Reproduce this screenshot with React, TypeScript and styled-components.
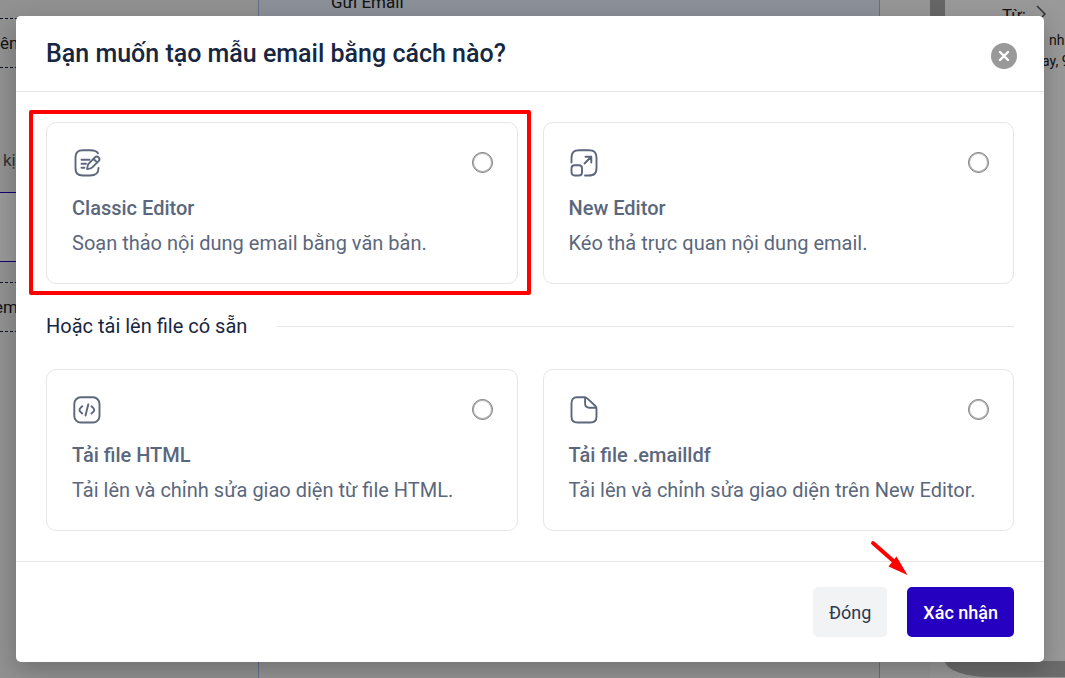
import React from "react";
import styled, { createGlobalStyle } from "styled-components";

const Global = createGlobalStyle`
  *, *::before, *::after { box-sizing: border-box; }
  html, body, #root { height: 100%; }
  body {
    margin: 0;
    overflow: hidden;
    font-family: Roboto, "Noto Sans", sans-serif;
    color: #172742;
    background: #fff;
  }
  h2, h3, p { margin: 0; }
`;

const Screen = styled.div`
  display: grid;
  min-height: 100vh;
  > * { grid-area: 1 / 1; }
`;

const Workspace = styled.div`
  display: flex;
  height: 100vh;
  overflow: hidden;
  font-size: 17px;
  line-height: 20px;
  color: #222;
`;

const Sidebar = styled.div`
  flex: 0 0 258px;
  padding-top: 18px;
  background: #f2f2f2;
`;

const Slot = styled.div<{ $indent?: number }>`
  height: 50px;
  padding: 14px 0;
  text-indent: ${(p) => p.$indent ?? 0}px;
  border: 1px dashed #14213d;
  border-width: 1px 0;
`;

const FieldLabel = styled.p`
  padding: 82px 0 22px 3px;
  color: #555;
`;

const Field = styled.div`
  height: 70px;
  margin-bottom: 20px;
  border: 1px solid #2600c0;
  border-width: 1px 0;
  background: #fff;
`;

const Canvas = styled.div`
  flex: 1;
  display: flex;
  flex-direction: column;
  border: 1px solid #a4b9ec;
  border-width: 0 1px;
  background: #f7f7f7;
`;

const CanvasTop = styled.div`
  height: 320px;
  padding-left: 72px;
  background: #e9f1fd;
  > p { margin-top: -8px; }
`;

const Gutter = styled.div`
  flex: 0 0 50px;
  background: #fafafa;
`;

const Scrollbar = styled.div`
  flex: 0 0 15px;
  height: 640px;
  background: #ababab;
`;

const Preview = styled.div`
  flex: 0 0 120px;
  min-width: 0;
  display: flex;
  flex-direction: column;
  justify-content: space-between;
  font-size: 14px;
  line-height: 21px;
`;

const PreviewFrom = styled.div`
  display: flex;
  justify-content: space-between;
  padding: 5px 17px 4px 57px;
  font-size: 17px;
`;

const PreviewLine = styled.p`
  padding-left: 97px;
  white-space: nowrap;
`;

const Phone = styled.div`
  height: 16px;
  margin-bottom: 1px;
  border-bottom-left-radius: 44px 16px;
  background: #b4b4b4;
`;

const Overlay = styled.div`
  z-index: 1;
  padding: 16px 21px 16px 16px;
  background: rgba(0, 0, 0, 0.4);
`;

const Dialog = styled.section`
  border-radius: 5px;
  background: #fff;
  box-shadow: 0 8px 24px rgba(0, 0, 0, 0.24);
`;

const DialogHeader = styled.header`
  display: flex;
  justify-content: space-between;
  align-items: center;
  height: 76px;
  padding: 0 27px 0 30px;
  border-bottom: 1px solid #e6e6e6;
`;

const DialogTitle = styled.h2`
  font-size: 25px;
  font-weight: 500;
  line-height: 30px;
`;

const CloseButton = styled.button`
  display: grid;
  place-items: center;
  width: 26px;
  height: 26px;
  margin-top: 4px;
  padding: 0;
  border: 0;
  border-radius: 50%;
  background: #999;
`;

const Choices = styled.div`
  padding: 30px;
`;

const CardGrid = styled.div`
  display: grid;
  grid-template-columns: 1fr 1fr;
  gap: 25px;
`;

const Card = styled.label`
  position: relative;
  padding: 25px 24px 25px 25px;
  border: 1px solid #e6e6e6;
  border-radius: 10px;
  color: #5b677c;
`;

const CardTop = styled.div`
  display: flex;
  justify-content: space-between;
  height: 45px;
`;

const Radio = styled.input`
  width: 21px;
  height: 21px;
  margin: 4px 0 0;
  appearance: none;
  border: 1px solid #767676;
  border-radius: 50%;
  box-shadow: inset 0 0 0 1px rgba(118, 118, 118, 0.6);
  &:checked { border: 6px solid #2600c0; }
`;

const CardTitle = styled.h3`
  margin-bottom: 5px;
  font-size: 20px;
  font-weight: 500;
  line-height: 30px;
`;

const CardText = styled.p`
  font-size: 20px;
  line-height: 30px;
`;

const Highlight = styled.span`
  position: absolute;
  inset: -13px -14px -12px -18px;
  border: 4px solid #f00;
  border-radius: 2px;
  pointer-events: none;
`;

const Divider = styled.div`
  display: flex;
  align-items: center;
  gap: 30px;
  padding: 27px 0 28px;
  font-size: 20px;
  line-height: 30px;
  &::after {
    content: "";
    flex: 1;
    height: 1px;
    background: #e6e6e6;
  }
`;

const DialogFooter = styled.footer`
  display: flex;
  justify-content: flex-end;
  gap: 20px;
  padding: 25px 30px;
  border-top: 1px solid #e6e6e6;
`;

const Button = styled.button<{ $primary?: boolean }>`
  position: relative;
  height: 50px;
  padding: 0 16px;
  border: 0;
  border-radius: 5px;
  font-family: inherit;
  font-size: 18px;
  font-weight: ${(p) => (p.$primary ? 500 : 400)};
  color: ${(p) => (p.$primary ? "#fff" : "#2b3850")};
  background: ${(p) => (p.$primary ? "#2600c0" : "#f1f3f5")};
`;

const Arrow = styled.svg`
  position: absolute;
  left: -38px;
  top: -48px;
  pointer-events: none;
`;

const Glyph = ({ children }: { children: React.ReactNode }) => (
  <svg width="30" height="30" viewBox="0 0.5 30 30" fill="none" stroke="#5b677c"
    strokeWidth="1.9" strokeLinecap="round" strokeLinejoin="round" aria-hidden="true">
    {children}
  </svg>
);

const EditGlyph = (
  <Glyph>
    <path d="M26 5.8C24.6 3 22 2.8 18 2.8H11C5.5 2.8 3.5 4.8 3.5 10.8V20C3.5 26 5.5 28 11 28H18C24 28 26.5 26 26.5 20.5" />
    <path d="M9.5 12.2H17.5M9.5 16.2H14M9.5 20.2H12.5" />
    <path d="M22.8 10C24 8.8 25.7 8.8 26.7 9.8C27.7 10.8 27.7 12.4 26.6 13.6L20 20.2C19.2 21 18.2 21.4 15.2 21.6C15.3 18.5 15.8 17.2 16.5 16.4ZM21.5 11.4L25.2 15" />
  </Glyph>
);

const ScaleGlyph = (
  <Glyph>
    <path d="M2.5 15V11C2.5 4.8 4.5 2.8 10.5 2.8H19.5C25.5 2.8 27.5 4.8 27.5 10.8V20C27.5 26 25.5 28 19.5 28H16" />
    <rect x="2.5" y="17.8" width="10.5" height="10.2" rx="3" />
    <path d="M15.5 16L21.5 10M16.5 9.2H22.3V15" />
  </Glyph>
);

const CodeGlyph = (
  <Glyph>
    <rect x="2.3" y="2.8" width="25.2" height="25.2" rx="6.5" />
    <path d="M10.2 11.8L8.5 13.4C7.2 14.6 7.2 16.2 8.5 17.4L10.2 19M19.5 11.8L21.2 13.4C22.5 14.6 22.5 16.2 21.2 17.4L19.5 19M16.3 9.8L13.5 21" />
  </Glyph>
);

const FileGlyph = (
  <Glyph>
    <path d="M8 2.8H15C16.5 2.8 17.7 3.4 18.8 4.4L25.9 11C27 12 27.5 13.1 27.5 14.7V22C27.5 26 25.7 28 21.5 28H8.5C4.3 28 2.5 26 2.5 22V8.8C2.5 4.8 4.3 2.8 8 2.8Z" />
    <path d="M16.1 3V9C16.1 12 17.3 13.2 20.3 13.2H27.3" />
  </Glyph>
);

type OptionProps = {
  value: string;
  title: string;
  text: string;
  icon: React.ReactNode;
  highlighted?: boolean;
};

const Option = ({ value, title, text, icon, highlighted }: OptionProps) => (
  <Card>
    <CardTop>
      {icon}
      <Radio type="radio" name="editor" value={value} />
    </CardTop>
    <CardTitle>{title}</CardTitle>
    <CardText>{text}</CardText>
    {highlighted && <Highlight />}
  </Card>
);

export default function App() {
  return (
    <>
      <Global />
      <Screen>
        <Workspace aria-hidden="true">
          <Sidebar>
            <Slot>ên</Slot>
            <FieldLabel>kị</FieldLabel>
            <Field />
            <Slot $indent={-6}>em</Slot>
          </Sidebar>
          <Canvas>
            <CanvasTop>
              <p>Gửi Email</p>
            </CanvasTop>
          </Canvas>
          <Gutter />
          <Scrollbar />
          <Preview>
            <div>
              <PreviewFrom>
                <span>Từ:</span>
                <svg width="12" height="18" viewBox="0 0 12 18" fill="none" stroke="#555" strokeWidth="1.5">
                  <path d="M1 1L9 9L1 17" />
                </svg>
              </PreviewFrom>
              <PreviewLine>&nbsp; nh</PreviewLine>
              <PreviewLine>ay, 9</PreviewLine>
            </div>
            <Phone />
          </Preview>
        </Workspace>

        <Overlay>
          <Dialog role="dialog" aria-modal="true" aria-labelledby="dialog-title">
            <DialogHeader>
              <DialogTitle id="dialog-title">Bạn muốn tạo mẫu email bằng cách nào?</DialogTitle>
              <CloseButton type="button" aria-label="Đóng">
                <svg width="12" height="12" viewBox="0 0 12 12" stroke="#fff" strokeWidth="2.4" strokeLinecap="round">
                  <path d="M2 2L10 10M10 2L2 10" />
                </svg>
              </CloseButton>
            </DialogHeader>
            <Choices>
              <CardGrid>
                <Option value="classic" title="Classic Editor" text="Soạn thảo nội dung email bằng văn bản." icon={EditGlyph} highlighted />
                <Option value="new" title="New Editor" text="Kéo thả trực quan nội dung email." icon={ScaleGlyph} />
              </CardGrid>
              <Divider>Hoặc tải lên file có sẵn</Divider>
              <CardGrid>
                <Option value="html" title="Tải file HTML" text="Tải lên và chỉnh sửa giao diện từ file HTML." icon={CodeGlyph} />
                <Option value="ldf" title="Tải file .emailldf" text="Tải lên và chỉnh sửa giao diện trên New Editor." icon={FileGlyph} />
              </CardGrid>
            </Choices>
            <DialogFooter>
              <Button type="button">Đóng</Button>
              <Button type="button" $primary>
                Xác nhận
                <Arrow width="40" height="38" viewBox="0 0 40 38" aria-hidden="true">
                  <path d="M4 4L25 22.5" stroke="#f00" strokeWidth="4" strokeLinecap="round" />
                  <path d="M38.5 36L19.5 27.5L23 23L27.5 17.5Z" fill="#f00" />
                </Arrow>
              </Button>
            </DialogFooter>
          </Dialog>
        </Overlay>
      </Screen>
    </>
  );
}
